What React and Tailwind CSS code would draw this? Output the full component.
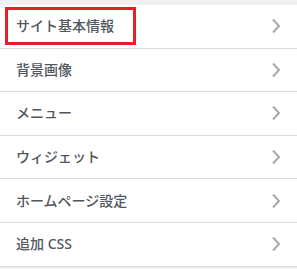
import React from "react";

const sections = [
  "サイト基本情報",
  "背景画像",
  "メニュー",
  "ウィジェット",
  "ホームページ設定",
  "追加 CSS",
];

function Chevron() {
  return (
    <svg width="10" height="16" viewBox="0 0 10 16" className="text-[#a7aaad]">
      <path
        d="M2 1.5 L8 8 L2 14.5"
        fill="none"
        stroke="currentColor"
        strokeWidth="2"
      />
    </svg>
  );
}

export default function App() {
  return (
    <div
      className="w-[297px] h-[269px] bg-[#f0f0f1] pt-[5px] overflow-hidden"
      style={{ fontFamily: '"Noto Sans", "Noto Sans CJK JP", sans-serif' }}
    >
      <ul className="bg-white">
        {sections.map((title, i) => (
          <li
            key={i}
            className="relative h-[43.6px] border-b border-[#dcdcde] flex items-center justify-between pl-[16px] pr-[16px]"
          >
            <span className="text-[14px] font-medium text-[#50575e] leading-none">
              {title}
            </span>
            <Chevron />
            {i === 0 && (
              <div className="absolute left-[5px] top-[2px] w-[131px] h-[38px] border-[3px] border-[#e61e27]" />
            )}
          </li>
        ))}
      </ul>
    </div>
  );
}
